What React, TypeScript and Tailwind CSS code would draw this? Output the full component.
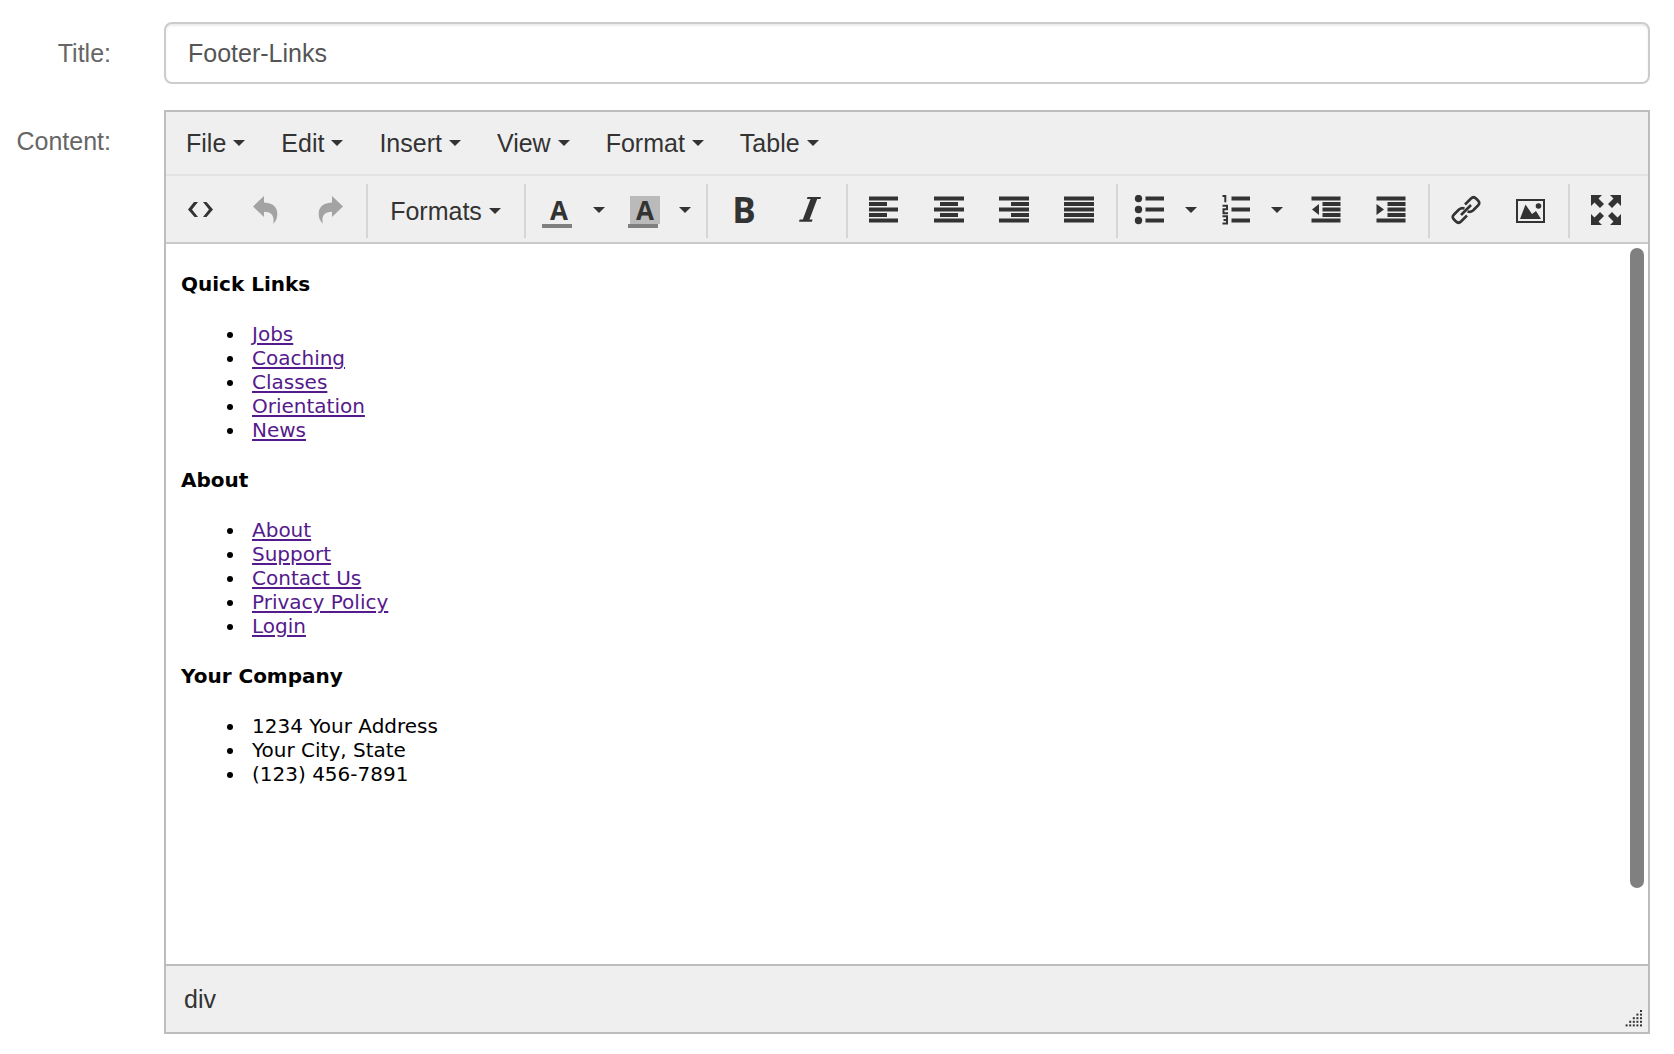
import type { ReactNode } from "react";

const menus = ["File", "Edit", "Insert", "View", "Format", "Table"];

const sections = [
  { title: "Quick Links", linked: true, items: ["Jobs", "Coaching", "Classes", "Orientation", "News"] },
  { title: "About", linked: true, items: ["About", "Support", "Contact Us", "Privacy Policy", "Login"] },
  { title: "Your Company", linked: false, items: ["1234 Your Address", "Your City, State", "(123) 456-7891"] },
];

function Caret() {
  return (
    <svg aria-hidden="true" className="h-[6px] w-[12px] shrink-0" viewBox="0 0 12 6" fill="currentColor">
      <path d="M0 0h12L6 6z" />
    </svg>
  );
}

function Icon({ children }: { children: ReactNode }) {
  return (
    <svg aria-hidden="true" className="size-[30px] shrink-0" viewBox="0 0 30 30" fill="currentColor">
      {children}
    </svg>
  );
}

/* Each bar is [x, width]; rows are spaced evenly from top to bottom. */
function Bars({ rows }: { rows: [number, number][] }) {
  return (
    <Icon>
      {rows.map(([x, w], i) => (
        <rect key={i} x={x} y={1.5 + i * 5.5} width={w} height="4" />
      ))}
    </Icon>
  );
}

function Group({ children }: { children: ReactNode }) {
  return (
    <div className="flex h-[54px] items-start gap-[3px] border-l-2 border-[#d6d6d6] pr-[6px] pl-[5px] first:border-l-0 first:pr-[5px] first:pl-[3px]">
      {children}
    </div>
  );
}

function Tool({ label, disabled, children }: { label: string; disabled?: boolean; children: ReactNode }) {
  return (
    <button
      type="button"
      aria-label={label}
      disabled={disabled}
      className="flex h-[52px] w-[62px] items-center justify-center disabled:text-[#a3a3a3]"
    >
      {children}
    </button>
  );
}

function Split({ label, children }: { label: string; children: ReactNode }) {
  return (
    <div className="flex h-[52px] w-[83px]">
      <button type="button" aria-label={label} className="flex flex-1 items-center justify-center">
        {children}
      </button>
      <button type="button" aria-label={`${label} options`} className="flex w-[31px] items-center justify-center">
        <Caret />
      </button>
    </div>
  );
}

function ColorLetter({ filled }: { filled?: boolean }) {
  return (
    <span className="mt-1 flex w-[30px] flex-col border-b-4 border-[#808080] font-['Open_Sans',sans-serif] text-[26px] leading-7 font-bold">
      <span className={filled ? "ml-[2px] w-[30px] bg-[#bababa] text-center" : "ml-[2px] w-[30px] text-center"}>A</span>
    </span>
  );
}

export default function App() {
  return (
    <form className="grid min-h-screen grid-cols-[111px_minmax(0,1fr)] content-start gap-x-[53px] gap-y-[26px] bg-white pt-[22px] pr-6 font-['Liberation_Sans',Arial,sans-serif] text-[25px] leading-[30px] text-[#333]">
      <label htmlFor="title" className="pt-4 text-right text-[#666]">
        Title:
      </label>
      <input
        id="title"
        type="text"
        defaultValue="Footer-Links"
        className="h-[62px] w-full rounded-lg border-2 border-[#ccc] bg-white px-[22px] text-[#555] shadow-[inset_0_2px_2px_rgba(0,0,0,0.075)] outline-none"
      />

      <span id="content-label" className="pt-4 text-right text-[#666]">
        Content:
      </span>
      <div role="group" aria-labelledby="content-label" className="border-2 border-[#bdbdbd] bg-[#efefef]">
        <div className="flex h-16 items-center gap-[2px] border-b-2 border-[#e3e3e3] pl-[3px]">
          {menus.map((name) => (
            <button key={name} type="button" className="flex items-center gap-[7px] px-[17px]">
              {name}
              <Caret />
            </button>
          ))}
        </div>

        <div className="flex border-b-2 border-[#cacaca] pt-2 pb-1">
          <Group>
            <Tool label="Source code">
              <Icon>
                <path d="M9 7h4l-6 7.500 6 7.500H9.500l-6.500-7.500zM21.500 7H18l6 7.500-6 7.500h3.500l6.500-7.500z" />
              </Icon>
            </Tool>
            <Tool label="Undo" disabled>
              <Icon>
                <path d="M3 11.500 14 1v6.500C24.500 8 27 13 27.300 18.500c.1 4.500-1.500 8-4.300 10.300 1.800-6.500-.5-12-9-12V22z" />
              </Icon>
            </Tool>
            <Tool label="Redo" disabled>
              <Icon>
                <path d="M28 11.500 17 1v6.500C6.500 8 4 13 3.700 18.500c-.1 4.500 1.500 8 4.300 10.300-1.800-6.500.5-12 9-12V22z" />
              </Icon>
            </Tool>
          </Group>
          <Group>
            <button type="button" className="flex h-[52px] w-[145px] items-center justify-center gap-[7px] pt-[2px]">
              Formats
              <Caret />
            </button>
          </Group>
          <Group>
            <Split label="Text color">
              <ColorLetter />
            </Split>
            <Split label="Background color">
              <ColorLetter filled />
            </Split>
          </Group>
          <Group>
            <Tool label="Bold">
              <span className="font-['Open_Sans',sans-serif] text-[35px] leading-[50px] font-bold">B</span>
            </Tool>
            <Tool label="Italic">
              <Icon>
                <path d="M13.500 2H27l-.6 2h-3.200L15.500 24.500h3l-.6 2.300H5l.6-2.300h3.200L16.500 4h-3.600z" />
              </Icon>
            </Tool>
          </Group>
          <Group>
            <Tool label="Align left">
              <Bars rows={[[0, 29], [0, 18], [0, 29], [0, 18], [0, 29]]} />
            </Tool>
            <Tool label="Align center">
              <Bars rows={[[0, 30], [6, 18], [0, 30], [6, 18], [0, 30]]} />
            </Tool>
            <Tool label="Align right">
              <Bars rows={[[0, 30], [12, 18], [0, 30], [12, 18], [0, 30]]} />
            </Tool>
            <Tool label="Justify">
              <Bars rows={[[0, 30], [0, 30], [0, 30], [0, 30], [0, 30]]} />
            </Tool>
          </Group>
          <Group>
            <Split label="Bullet list">
              <Icon>
                {[3.5, 14.5, 25.5].map((y) => (
                  <g key={y}>
                    <circle cx="4.500" cy={y} r="3.700" />
                    <rect x="11.500" y={y - 2} width="18.500" height="4" />
                  </g>
                ))}
              </Icon>
            </Split>
            <Split label="Numbered list">
              <Icon>
                {[3.5, 14.5, 25.5].map((y) => (
                  <rect key={y} x="11.500" y={y - 2} width="18.500" height="4" />
                ))}
                <path
                  d="M2.500 1h2.800V7.200M2.500 10.700H7v3.500H3.500v4H8M2.500 21.300H7v7.200H2.500M3.500 25H7"
                  fill="none"
                  stroke="currentColor"
                  strokeWidth="2"
                />
              </Icon>
            </Split>
            <Tool label="Decrease indent">
              <Icon>
                <path d="M.5 1.500h29v4H.5zM11.500 7h18v4h-18zM11.500 12.500h18v4h-18zM11.500 18h18v4h-18zM.5 23.500h29v4H.5zM8 9v11l-7-5.500z" />
              </Icon>
            </Tool>
            <Tool label="Increase indent">
              <Icon>
                <path d="M.5 1.500h29v4H.5zM11.500 7h18v4h-18zM11.500 12.500h18v4h-18zM11.500 18h18v4h-18zM.5 23.500h29v4H.5zM.5 9v11L8 14.500z" />
              </Icon>
            </Tool>
          </Group>
          <Group>
            <Tool label="Insert link">
              <Icon>
                <g fill="none" stroke="currentColor" strokeWidth="2.600" strokeLinejoin="round">
                  <path d="M10 20 20 10" />
                  <path d="M14 9.500 20 3.500q2.500-2.500 5 0l2 2q2.500 2.500 0 5l-5 5q-2.500 2-5.500 1" />
                  <path d="M16 20.500 10 26.500q-2.500 2.500-5 0l-2-2q-2.500-2.500 0-5l5-5q2.500-2 5.500-1" />
                </g>
              </Icon>
            </Tool>
            <Tool label="Insert image">
              <Icon>
                <path d="M0 4h29v24H0zM2 6v20h25V6z" fillRule="evenodd" />
                <path d="M4 24 9.500 9.500 16 19l4-3 5 8z" />
                <circle cx="22.500" cy="11" r="2.800" />
              </Icon>
            </Tool>
          </Group>
          <Group>
            <Tool label="Fullscreen">
              <Icon>
                {[0, 90, 180, 270].map((a) => (
                  <path
                    key={a}
                    transform={`rotate(${a} 15 15)`}
                    d="M0 0h11L7.500 3.500 13 9l-4 4-5.500-5.500L0 11z"
                  />
                ))}
              </Icon>
            </Tool>
          </Group>
        </div>

        <div className="flex min-h-[720px] bg-white">
          <div className="flex-1 px-[15px] pt-7 font-['DejaVu_Sans',Verdana,sans-serif] text-[20px] leading-6 text-black">
            {sections.map((s) => (
              <section key={s.title} className="mb-[26px]">
                <h2 className="mb-[26px] font-bold">{s.title}</h2>
                <ul className="list-disc pl-[65px]">
                  {s.items.map((item) => (
                    <li key={item} className="pl-[6px]">
                      {s.linked ? (
                        <a href="#" className="text-[#551a8b] underline decoration-2 underline-offset-2">
                          {item}
                        </a>
                      ) : (
                        item
                      )}
                    </li>
                  ))}
                </ul>
              </section>
            ))}
          </div>
          <div className="pt-1 pr-1">
            <div className="h-[640px] w-[14px] rounded-full bg-[#808080]" />
          </div>
        </div>

        <div className="flex h-[68px] items-center justify-between border-t-2 border-[#bdbdbd] pl-[18px]">
          <span>div</span>
          <svg aria-hidden="true" className="mr-[5px] mb-[5px] size-[18px] self-end" viewBox="0 0 18 18" fill="#333">
            {[0, 1, 2, 3, 4].flatMap((r) =>
              Array.from({ length: r + 1 }, (_, c) => (
                <rect key={`${r}-${c}`} x={15 - c * 3.6} y={1 + r * 3.6} width="2" height="2" />
              )),
            )}
          </svg>
        </div>
      </div>
    </form>
  );
}
